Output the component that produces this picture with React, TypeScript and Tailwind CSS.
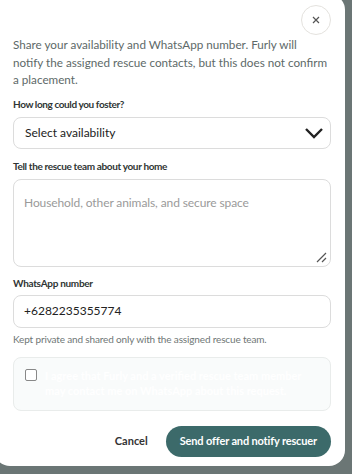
import React from 'react'

export default function App() {
  const [agree, setAgree] = React.useState(false)

  return (
    <div className="w-[352px] h-[474px] overflow-hidden bg-[#6b7675] font-['Lato',sans-serif]">
      <div className="relative -ml-[6px] -mt-[6px] w-[351px] h-[472px] rounded-2xl bg-white pl-[19px] pr-[14px] pt-[11px]">
        <div className="flex justify-end">
          <button className="flex h-[30px] w-[30px] items-center justify-center rounded-full border border-[#e4e2de] text-[#555]">
            <svg width="8" height="8" viewBox="0 0 8 8" fill="none" stroke="currentColor" strokeWidth="1.2">
              <path d="M1 1l6 6M7 1L1 7" />
            </svg>
          </button>
        </div>

        <p className="mt-[1px] text-[11.7px] leading-[17.5px] text-[#5d6968]">
          Share your availability and WhatsApp number. Furly will
          <br />
          notify the assigned rescue contacts, but this does not confirm a placement.
        </p>

        <label className="mt-[8px] block text-[10px] font-bold tracking-[-0.4px] text-[#2f3534]">How long could you foster?</label>
        <div className="mt-[5px] flex h-[32px] items-center justify-between rounded-lg border border-[#dcdcdc] pl-[11px] pr-[6px]">
          <span className="text-[12px] text-[#222]">Select availability</span>
          <svg width="20" height="12" viewBox="0 0 20 12" fill="none" stroke="#222" strokeWidth="2.4">
            <path d="M2 2l8 8 8-8" />
          </svg>
        </div>

        <label className="mt-[10px] block text-[10px] font-bold tracking-[-0.35px] text-[#2f3534]">Tell the rescue team about your home</label>
        <div className="relative mt-[5px] h-[88px] rounded-lg border border-[#dcdcdc] px-[10px] pt-[9px]">
          <span className="text-[12px] tracking-[-0.1px] text-[#9a9a9a]">Household, other animals, and secure space</span>
          <svg className="absolute bottom-[3px] right-[3px]" width="12" height="12" viewBox="0 0 12 12" stroke="#555" strokeWidth="1.2">
            <path d="M11 2L2 11M11 7L7 11" />
          </svg>
        </div>

        <label className="mt-[9px] block text-[10px] font-bold tracking-[-0.3px] text-[#2f3534]">WhatsApp number</label>
        <div className="mt-[4px] flex h-[33px] items-center rounded-lg border border-[#dcdcdc] px-[10px]">
          <span className="text-[12px] text-[#222]">+6282235355774</span>
        </div>
        <p className="mt-[4px] text-[10px] tracking-[-0.15px] text-[#6f7776]">Kept private and shared only with the assigned rescue team.</p>

        <label className="mt-[10px] flex h-[54px] gap-[8px] rounded-lg border border-[#e9eceb] bg-[#f9fbfb] px-[11px] pt-[10px]">
          <input
            type="checkbox"
            checked={agree}
            onChange={(e) => setAgree(e.target.checked)}
            className="mt-[1px] h-[12px] w-[12px] shrink-0 appearance-none rounded-[2px] border border-[#888] bg-white"
          />
          <span className="text-[11px] font-bold leading-[15px] text-white">
            I agree that Furly and a verified rescue team member may contact me on WhatsApp about this request.
          </span>
        </label>

        <div className="mt-[15px] flex items-center justify-end gap-[18px]">
          <button className="text-[11px] font-bold text-[#333]">Cancel</button>
          <button className="h-[31px] rounded-full bg-[#3c6a6a] px-[14px] text-[11px] font-bold tracking-[-0.15px] text-white">
            Send offer and notify rescuer
          </button>
        </div>
      </div>
    </div>
  )
}
